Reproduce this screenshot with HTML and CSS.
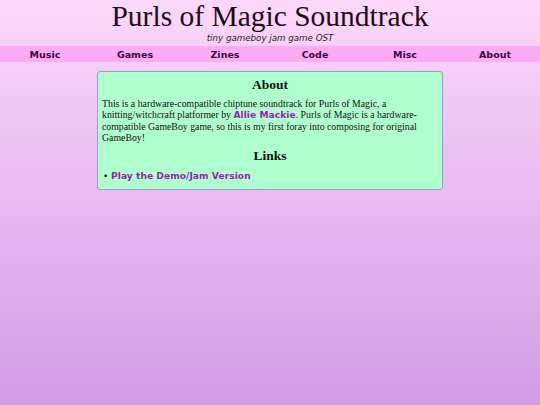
FILE: index.html
```html
<!DOCTYPE html>
<html>
<head>
<meta charset="utf-8">
<title>Purls of Magic Soundtrack</title>
<link rel="stylesheet" href="styles.css">
</head>
<body>
<header class="header">
  <h1 class="title">Purls of Magic Soundtrack</h1>
  <p class="subtitle">tiny gameboy jam game OST</p>
</header>
<nav class="nav">
  <a class="nav-link" href="#">Music</a>
  <a class="nav-link" href="#">Games</a>
  <a class="nav-link" href="#">Zines</a>
  <a class="nav-link" href="#">Code</a>
  <a class="nav-link" href="#">Misc</a>
  <a class="nav-link" href="#">About</a>
</nav>
<main class="card">
  <h2 class="card-heading">About</h2>
  <p class="card-text">This is a hardware-compatible chiptune soundtrack for Purls of Magic, a knitting/witchcraft platformer by <a class="link" href="#">Allie Mackie</a>. Purls of Magic is a hardware-compatible GameBoy game, so this is my first foray into composing for original GameBoy!</p>
  <h2 class="card-heading">Links</h2>
  <ul class="link-list">
    <li class="link-item"><a class="link" href="#">Play the Demo/Jam Version</a></li>
  </ul>
</main>
</body>
</html>
```

FILE: styles.css
```css
html, body {
  margin: 0;
  padding: 0;
}
body {
  min-height: 100vh;
  background: linear-gradient(to bottom, #fdd7f9 0%, #d09ce7 100%);
  font-family: "Liberation Serif", serif;
  color: #111;
}
.header {
  text-align: center;
}
.title {
  margin: 0;
  font-family: "Liberation Serif", serif;
  font-weight: normal;
  font-size: 29.5px;
  line-height: 32px;
  color: #1a0f1a;
}
.subtitle {
  margin: 0;
  font-family: "DejaVu Sans", sans-serif;
  font-style: italic;
  font-size: 8.7px;
  line-height: 13px;
  color: #222;
}
.nav {
  margin-top: 1px;
  display: grid;
  grid-template-columns: repeat(6, 1fr);
  background: #ffaaf5;
  height: 16px;
  align-items: center;
}
.nav-link {
  text-align: center;
  font-family: "DejaVu Sans", sans-serif;
  font-weight: bold;
  font-size: 9.5px;
  color: #3a0a44;
  text-decoration: none;
}
.card {
  box-sizing: border-box;
  width: 346px;
  margin: 9px auto 0;
  padding: 1px 4px 6px;
  background: #affecd;
  border: 1px solid #9c9cd2;
  border-radius: 3px;
}
.card-heading {
  margin: 4px 0 5px;
  text-align: center;
  font-family: "Liberation Serif", serif;
  font-weight: bold;
  font-size: 13.5px;
  line-height: 16px;
}
.card-text {
  margin: 0 0 4px;
  font-size: 9.8px;
  line-height: 11.4px;
}
.link {
  font-family: "DejaVu Sans", sans-serif;
  font-weight: bold;
  font-size: 9.2px;
  line-height: 1;
  color: #9b1fae;
  text-decoration: none;
}
.link-list {
  margin: 0;
  padding: 0;
  list-style: none;
  font-size: 10px;
  line-height: 14px;
}
.link-item::before {
  content: "\2022";
  display: inline-block;
  width: 8px;
  margin-left: 1px;
  font-family: "DejaVu Sans", sans-serif;
  font-size: 9px;
}
```
